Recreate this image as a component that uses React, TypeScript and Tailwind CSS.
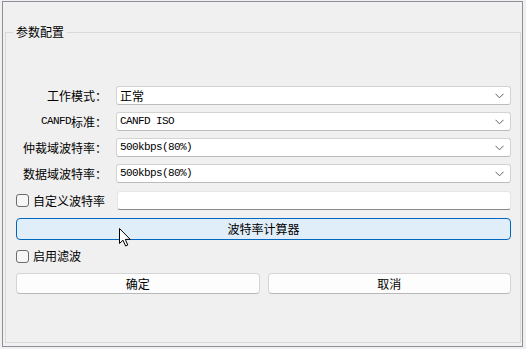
import React from 'react'

const cjk = { fontFamily: '"Noto Sans CJK SC", "Noto Sans", sans-serif' }
const mono = { fontFamily: '"Liberation Mono", "Noto Sans CJK SC", monospace' }

const selects = [
  { label: '工作模式：', value: '正常' },
  { label: 'CANFD标准：', value: 'CANFD ISO', monoLabel: 'CANFD' },
  { label: '仲裁域波特率：', value: '500kbps(80%)' },
  { label: '数据域波特率：', value: '500kbps(80%)' },
]

function Chevron() {
  return (
    <svg width="9" height="6" viewBox="0 0 9 6" className="shrink-0">
      <polyline points="0.5,0.8 4.5,4.8 8.5,0.8" fill="none" stroke="#5f5f5f" strokeWidth="1" />
    </svg>
  )
}

function Checkbox() {
  return <div className="w-[13px] h-[13px] rounded-[3px] border border-[#6b6b6b] bg-[#f6f6f6] shrink-0" />
}

export default function App() {
  return (
    <div className="relative w-[526px] h-[349px] bg-[#f0f0f0] pl-[2px] pt-[1px] text-[12px] text-black" style={cjk}>
      <div className="w-[521px] h-[346px] border border-[#8b8f97] pl-[2px]">
        <div className="relative mt-[30px] w-[516px] h-[311px] border border-[#dadada] pl-[10px] pr-[9px] pt-[53px]">
          {/* group title */}
          <span className="absolute left-[7px] -top-[9px] px-[3px] leading-[16px] bg-[#f0f0f0]">参数配置</span>

          <div className="grid grid-cols-[100px_1fr] gap-y-[7px]">
            {selects.map((s) => (
              <React.Fragment key={s.label}>
                <div className="flex items-center justify-end pr-[9px] h-[19px] leading-none">
                  {s.monoLabel ? (
                    <>
                      <span style={mono} className="text-[11px] tracking-[-0.6px]">{s.monoLabel}</span>
                      <span>标准：</span>
                    </>
                  ) : (
                    s.label
                  )}
                </div>
                <div className="flex items-center justify-between h-[19px] bg-white border border-[#d3d3d3] border-b-[#bcbcbc] rounded-[3px] pl-[3px] pr-[6px]">
                  <span style={s.value === '正常' ? cjk : mono} className={s.value === '正常' ? 'leading-none' : 'text-[11px] tracking-[-0.6px] leading-none'}>
                    {s.value}
                  </span>
                  <Chevron />
                </div>
              </React.Fragment>
            ))}
          </div>

          <div className="flex items-center mt-[8px] h-[19px]">
            <div className="flex items-center gap-[4px] w-[101px]">
              <Checkbox />
              <span className="leading-none">自定义波特率</span>
            </div>
            <div className="flex-1 h-[19px] bg-white border border-[#e6e6e6] border-b-[#8a8a8a] rounded-[3px]" />
          </div>

          <div className="mt-[8px] h-[22px] flex items-center justify-center bg-[#e0eef9] border border-[#0067c0] rounded-[4px] leading-none">
            波特率计算器
          </div>

          <div className="flex items-center gap-[4px] mt-[8px] h-[16px]">
            <Checkbox />
            <span className="leading-none">启用滤波</span>
          </div>

          <div className="grid grid-cols-2 gap-[8px] mt-[9px]">
            <div className="h-[21px] flex items-center justify-center bg-[#fdfdfd] border border-[#d5d5d5] border-b-[#b8b8b8] rounded-[4px] leading-none">确定</div>
            <div className="h-[21px] flex items-center justify-center bg-[#fdfdfd] border border-[#d5d5d5] border-b-[#b8b8b8] rounded-[4px] leading-none">取消</div>
          </div>
        </div>
      </div>

      {/* mouse cursor */}
      <svg className="absolute left-[119px] top-[228px]" width="13" height="19" viewBox="0 0 13 19">
        <path d="M0.5,0.5 L0.5,15.5 L4,12.2 L6.6,18 L8.8,17 L6.3,11.4 L11.2,11.4 Z" fill="#ffffff" stroke="#000000" strokeWidth="1" strokeLinejoin="miter" />
      </svg>
    </div>
  )
}
